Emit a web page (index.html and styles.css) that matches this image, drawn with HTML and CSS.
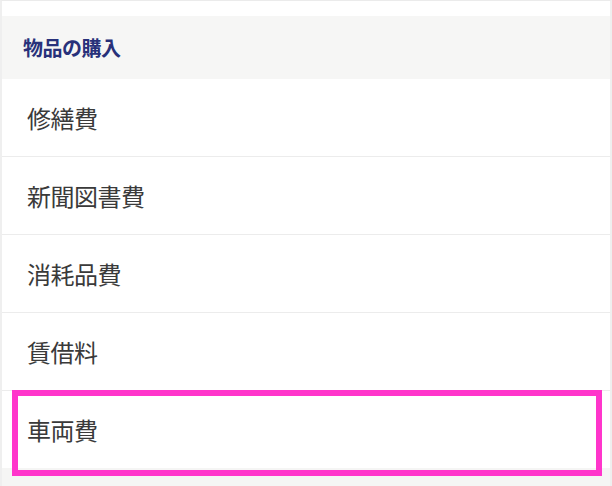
FILE: index.html
```html
<!DOCTYPE html>
<html lang="ja">
<head>
<meta charset="utf-8">
<link rel="stylesheet" href="styles.css">
</head>
<body>
<div class="panel">
  <div class="spacer"></div>
  <div class="section-title">物品の購入</div>
  <ul class="list">
    <li class="item">修繕費</li>
    <li class="item">新聞図書費</li>
    <li class="item">消耗品費</li>
    <li class="item">賃借料</li>
    <li class="item highlighted">車両費</li>
  </ul>
  <div class="footer"></div>
</div>
</body>
</html>
```
FILE: styles.css
```css
html, body {
  margin: 0;
  padding: 0;
  background: #ffffff;
}
body {
  font-family: "Noto Sans CJK JP", "Noto Sans", sans-serif;
  width: 612px;
  height: 486px;
  overflow: hidden;
}
.panel {
  box-sizing: border-box;
  height: 486px;
  border-top: 1px solid #ebebeb;
  border-left: 2px solid #efefef;
  border-right: 2px solid #efefef;
  display: flex;
  flex-direction: column;
}
.spacer {
  height: 15px;
  background: #ffffff;
}
.section-title {
  height: 63px;
  background: #f6f6f5;
  color: #28317a;
  font-weight: 700;
  font-size: 20px;
  line-height: 63px;
  padding-left: 21px;
  letter-spacing: -0.5px;
}
.list {
  list-style: none;
  margin: 0;
  padding: 0;
}
.item {
  height: 77px;
  line-height: 77px;
  border-bottom: 1px solid #ececec;
  font-size: 24px;
  color: #3a3a3a;
  padding-left: 25px;
  background: #ffffff;
  letter-spacing: -0.5px;
}
.item.highlighted {
  position: relative;
  border-bottom: none;
}
.item.highlighted::after {
  content: "";
  position: absolute;
  left: 10px;
  top: -1px;
  width: 590px;
  height: 86px;
  box-sizing: border-box;
  border: 6px solid #ff35cb;
}
.footer {
  flex: 1;
  background: #f5f5f4;
}
```
